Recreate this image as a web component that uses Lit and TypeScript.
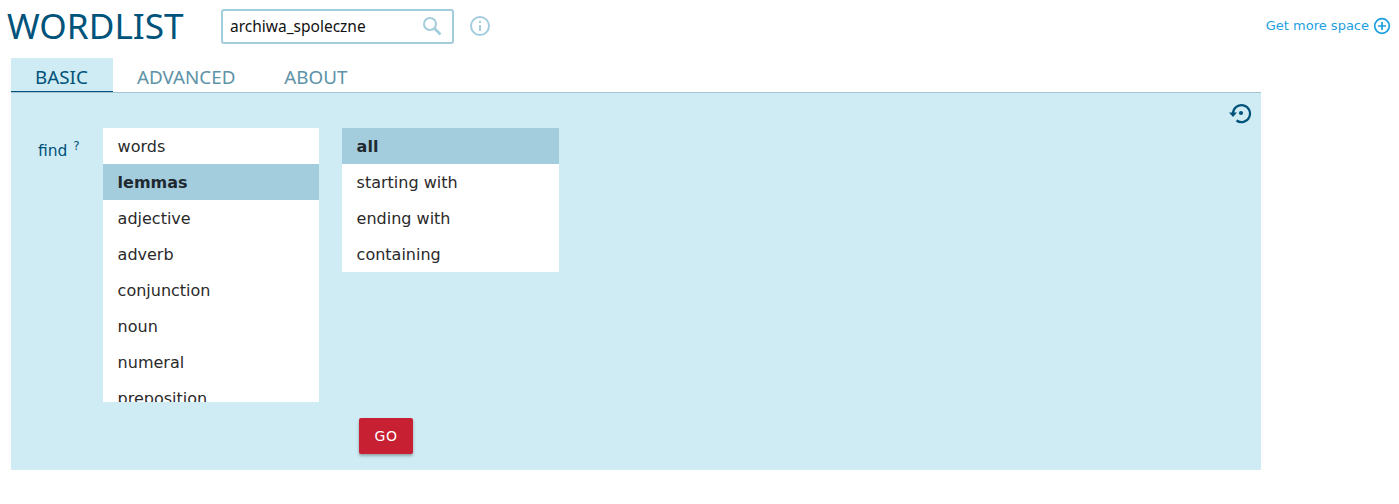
import { LitElement, html, css } from "lit";
import { customElement } from "lit/decorators.js";

const KINDS = ["words", "lemmas", "adjective", "adverb", "conjunction", "noun", "numeral", "preposition"];
const MATCH = ["all", "starting with", "ending with", "containing"];

@customElement("app-root")
export class AppRoot extends LitElement {
  static styles = css`
    :host { display: block; height: 504px; overflow: hidden; background: #fff; font-family: "DejaVu Sans", sans-serif; color: #2a2a2a; }
    .head { display: flex; align-items: center; height: 58px; padding-left: 7px; padding-right: 8px; box-sizing: border-box; padding-bottom: 7px; }
    .title { font: 35.2px/44px "Noto Sans", sans-serif; color: #00537a; width: 214px; flex: none; padding-bottom: 2px; }
    .search { width: 233px; height: 35px; margin-top: 2px; box-sizing: border-box; border: 2px solid #a3ccdc; border-radius: 3px; display: flex; align-items: center; justify-content: space-between; padding: 0 10px 2px 7px; font: 15.5px "Noto Sans", sans-serif; color: #111; }
    .info { margin-left: 15px; display: block; }
    .more { margin-left: auto; display: flex; align-items: center; gap: 4px; font-size: 13px; color: #1a9fe0; }
    .tabs { display: flex; margin-left: 11px; width: 1250px; height: 35px; box-sizing: border-box; border-bottom: 1px solid #a3c4d0; }
    .tab { height: 34px; box-sizing: border-box; padding: 0 24px; font: 18.8px/38px "Noto Sans", sans-serif; color: #5e93a8; }
    .tab.on { background: #cfebf3; color: #00537a; border-bottom: 1px solid #00537a; width: 102px; }
    .tab.adv { padding-right: 25px; }
    .panel { margin-left: 11px; width: 1250px; height: 377px; box-sizing: border-box; background: #cfebf3; position: relative; padding: 35px 0 0 27px; }
    .hist { position: absolute; right: 9px; top: 9px; display: block; }
    .row { display: flex; align-items: flex-start; }
    .label { width: 65px; padding-top: 12px; font-size: 15.5px; line-height: 22px; color: #00537a; flex: none; }
    .label sup { font-size: 12px; line-height: 0; margin-left: 1px; vertical-align: 6px; }
    .list { background: #fff; width: 216px; flex: none; overflow: hidden; }
    .list.kinds { height: 274px; }
    .list.match { margin-left: 23px; width: 217px; }
    .item { height: 36px; line-height: 37px; padding-left: 14.6px; font-size: 16px; }
    .item.on { background: #a3ccdc; font-weight: 700; color: #1e2a30; }
    .go { margin: 16px 0 0 321px; width: 54px; height: 36px; border-radius: 2px; background: #c62032; color: #fff; font-size: 14px; line-height: 36px; text-align: center; letter-spacing: 0.5px; box-shadow: 0 2px 3px rgba(0,0,0,.3); }
  `;

  render() {
    return html`
      <div class="head">
        <div class="title">WORDLIST</div>
        <div class="search">
          <span>archiwa_spoleczne</span>
          <svg width="20" height="20" viewBox="0 0 20 20" fill="none" stroke="#a3ccdc" stroke-width="2"><circle cx="8" cy="8" r="6"/><path d="M12.5 12.5l6 6" stroke-width="2.6"/></svg>
        </div>
        <svg class="info" width="22" height="22" viewBox="0 0 22 22" fill="none" stroke="#a3ccdc"><circle cx="11" cy="11" r="9" stroke-width="2"/><path d="M11 10v6" stroke-width="2"/><circle cx="11" cy="7" r="1.2" fill="#a3ccdc" stroke="none"/></svg>
        <div class="more">
          <span>Get more space</span>
          <svg width="18" height="18" viewBox="0 0 18 18" fill="none" stroke="#1a9fe0" stroke-width="1.7"><circle cx="9" cy="9" r="7.3"/><path d="M9 5v8M5 9h8"/></svg>
        </div>
      </div>
      <div class="tabs">
        <div class="tab on">BASIC</div>
        <div class="tab adv">ADVANCED</div>
        <div class="tab">ABOUT</div>
      </div>
      <div class="panel">
        <svg class="hist" width="24" height="22" viewBox="0 0 24 22" fill="none" stroke="#00537a" stroke-width="2.2"><path d="M5 11.500A8.500 8.500 0 1 1 8.500 18.500"/><path d="M1 10.500h8l-4 4.500z" fill="#00537a" stroke="none"/><circle cx="13" cy="11" r="2.100" fill="#00537a" stroke="none"/></svg>
        <div class="row">
          <div class="label">find <sup>?</sup></div>
          <div class="list kinds">${KINDS.map((k) => html`<div class="item ${k === "lemmas" ? "on" : ""}">${k}</div>`)}</div>
          <div class="list match">${MATCH.map((k) => html`<div class="item ${k === "all" ? "on" : ""}">${k}</div>`)}</div>
        </div>
        <div class="go">GO</div>
      </div>
    `;
  }
}
